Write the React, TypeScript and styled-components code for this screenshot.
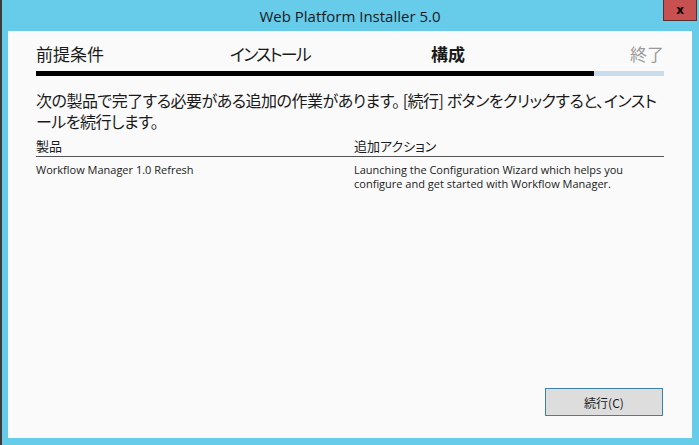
import React from "react";
import styled, { createGlobalStyle } from "styled-components";

const Global = createGlobalStyle`
  html, body { margin: 0; padding: 0; }
  body { width: 699px; height: 445px; overflow: hidden; background: #67cbea; font-family: "Open Sans", "Noto Sans CJK JP", sans-serif; }
`;

const Window = styled.div`
  width: 699px;
  height: 445px;
  box-sizing: border-box;
  background: #67cbea;
  border-left: 2px solid #3b3b3b;
  display: flex;
  flex-direction: column;
  padding: 0 7px 7px 6px;
`;

const TitleBar = styled.div`
  height: 31px;
  flex: none;
  display: flex;
  align-items: center;
  justify-content: center;
  position: relative;
  font-family: "Open Sans", sans-serif;
  font-size: 15px;
  color: #1a1a1a;
  padding-top: 1px;
  box-sizing: border-box;
`;

const CloseBtn = styled.div`
  position: absolute;
  right: -5px;
  top: 0;
  width: 34px;
  height: 21px;
  box-sizing: border-box;
  background: #c75050;
  border: 1px solid #5a2e2e;
  border-top: none;
  display: flex;
  align-items: center;
  justify-content: center;
  font-family: "DejaVu Sans", sans-serif;
  font-weight: bold;
  font-size: 12px;
  color: #000;
`;

const Content = styled.div`
  flex: 1;
  background: #fafafa;
  padding: 7px 28px 22px 28px;
  display: flex;
  flex-direction: column;
  font-family: "Noto Sans CJK JP", sans-serif;
`;

const Steps = styled.div`
  display: grid;
  grid-template-columns: 194px 201px 1fr auto;
  height: 26px;
  align-items: end;
  font-size: 17px;
  color: #1a1a1a;
  font-feature-settings: "palt";
`;

const Step = styled.div<{ $bold?: boolean; $muted?: boolean; $narrow?: boolean }>`
  font-weight: ${(p) => (p.$bold ? 700 : 400)};
  color: ${(p) => (p.$muted ? "#9a9a9a" : "#1a1a1a")};
  letter-spacing: ${(p) => (p.$narrow ? "-1.8px" : "0")};
  line-height: 20px;
`;

const Progress = styled.div`
  margin-top: 7px;
  height: 5px;
  background: #c9dcec;
  display: flex;
`;

const Fill = styled.div`
  background: #000;
  height: 100%;
`;

const Description = styled.p`
  margin: 14px 0 0 0;
  font-size: 16px;
  line-height: 21px;
  color: #1a1a1a;
  letter-spacing: -0.5px;
  line-break: anywhere;
  font-feature-settings: "palt";
`;

const TableHead = styled.div`
  margin-top: 5px;
  display: grid;
  grid-template-columns: 318px 1fr;
  border-bottom: 1px solid #555;
  font-size: 13px;
  line-height: 18px;
  padding-bottom: 1px;
  color: #1a1a1a;
  font-feature-settings: "palt";
`;

const TableRow = styled.div`
  display: grid;
  grid-template-columns: 318px 1fr;
  font-family: "Open Sans", sans-serif;
  font-size: 11px;
  line-height: 14px;
  color: #1a1a1a;
  padding-top: 6px;
`;

const Spacer = styled.div`
  flex: 1;
`;

const Footer = styled.div`
  display: flex;
  justify-content: flex-end;
  padding-right: 1px;
`;

const Button = styled.button`
  width: 118px;
  height: 28px;
  background: #dddddd;
  border: 1px solid #3c7fb1;
  font-family: "Noto Sans CJK JP", sans-serif;
  font-size: 12px;
  color: #1a1a1a;
  padding: 0;
`;

export default function App() {
  return (
    <>
      <Global />
      <Window>
        <TitleBar>
          Web Platform Installer 5.0
          <CloseBtn>x</CloseBtn>
        </TitleBar>
        <Content>
          <Steps>
            <Step>前提条件</Step>
            <Step $narrow>インストール</Step>
            <Step $bold>構成</Step>
            <Step $muted>終了</Step>
          </Steps>
          <Progress>
            <Fill style={{ width: "558px" }} />
          </Progress>
          <Description>
            次の製品で完了する必要がある追加の作業があります。 [続行] ボタンをクリックすると、インストールを続行します。
          </Description>
          <TableHead>
            <div>製品</div>
            <div>追加アクション</div>
          </TableHead>
          <TableRow>
            <div>Workflow Manager 1.0 Refresh</div>
            <div>
              Launching the Configuration Wizard which helps you
              <br />
              configure and get started with Workflow Manager.
            </div>
          </TableRow>
          <Spacer />
          <Footer>
            <Button>続行(C)</Button>
          </Footer>
        </Content>
      </Window>
    </>
  );
}
